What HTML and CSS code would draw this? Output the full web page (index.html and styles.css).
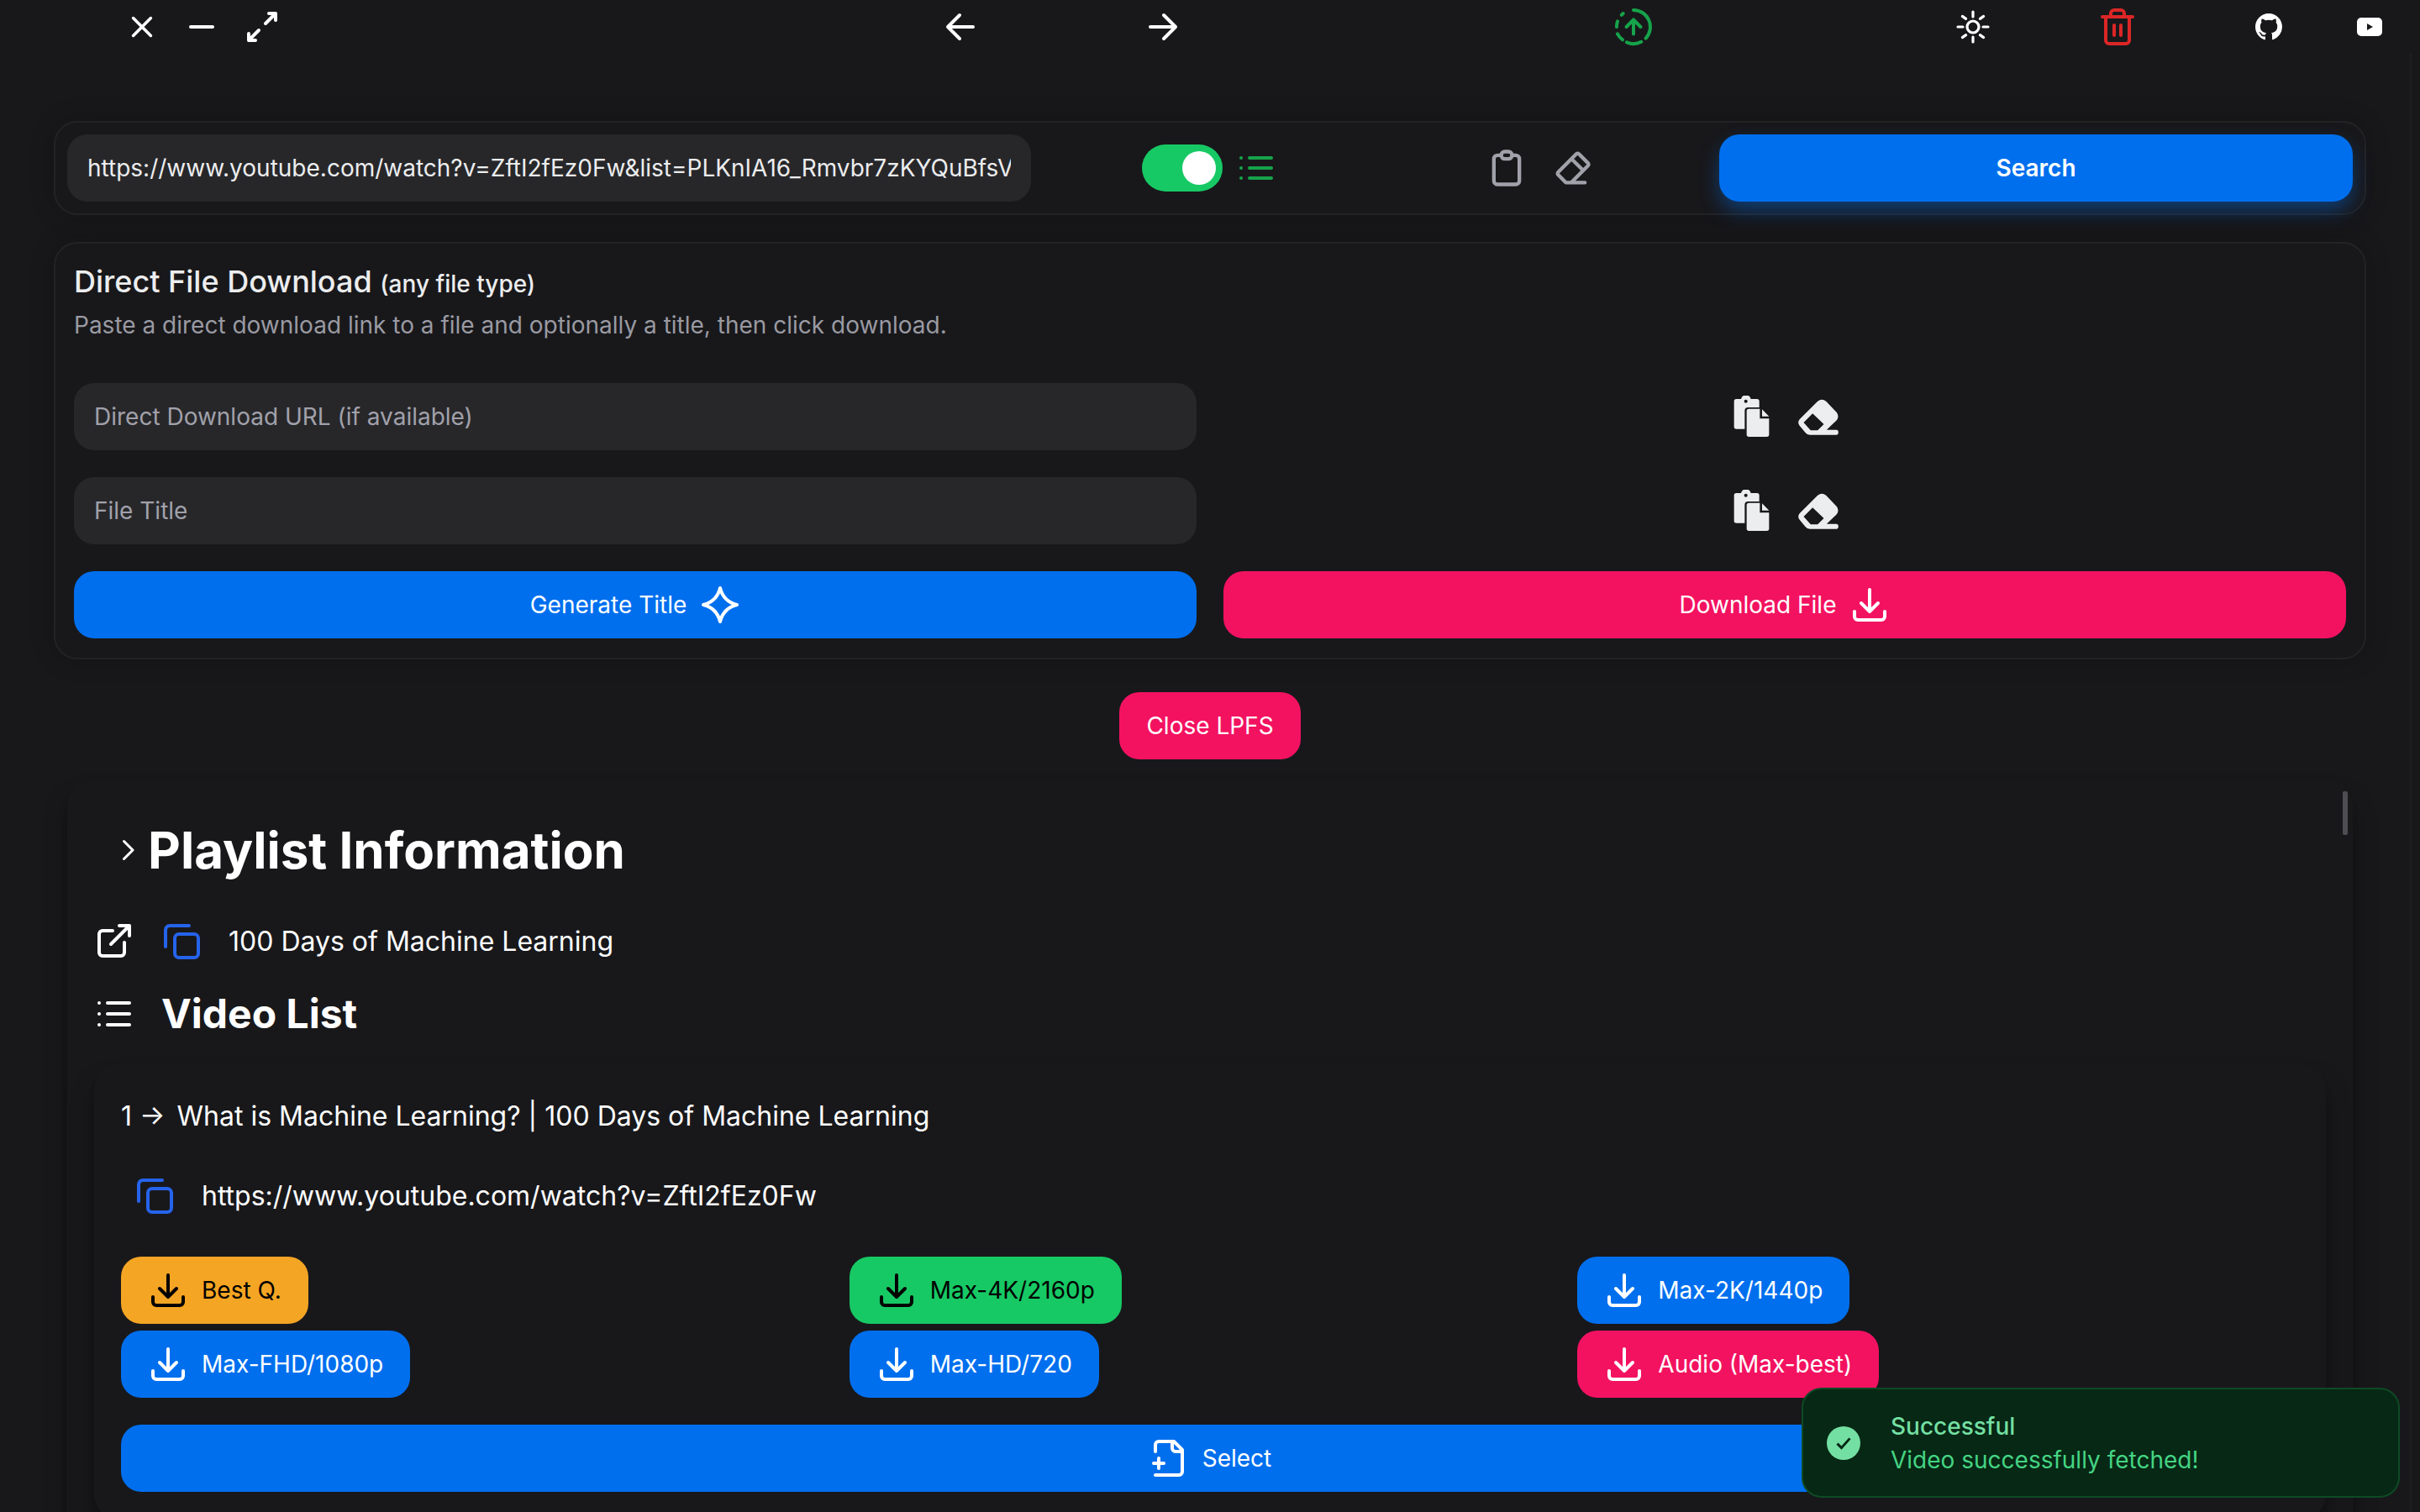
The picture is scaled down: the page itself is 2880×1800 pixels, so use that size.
FILE: index.html
```html
<!DOCTYPE html>
<html lang="en">
<head>
    <meta charset="UTF-8">
    <meta name="viewport" content="width=device-width, initial-scale=1.0">
    <title>Downloader</title>
    <link rel="stylesheet" href="styles.css">
</head>
<body>

    <header class="topbar">
        <span class="tb tb-close"><svg class="ic slim" viewBox="0 0 24 24"><path d="M17.200 6.800L6.800 17.200M6.800 6.800l10.400 10.400"/></svg></span>
        <span class="tb tb-min"><svg class="ic" viewBox="0 0 24 24"><path d="M5.500 12h13"/></svg></span>
        <span class="tb tb-max"><svg class="ic" viewBox="0 0 24 24"><path d="M16 4h4v4M14 10l6-6M8 20H4v-4M4 20l6-6"/></svg></span>
        <span class="tb tb-back"><svg class="ic" viewBox="0 0 24 24"><path d="M19.500 12h-15M11.500 5l-7 7 7 7"/></svg></span>
        <span class="tb tb-fwd"><svg class="ic" viewBox="0 0 24 24"><path d="M4.500 12h15M12.500 5l7 7-7 7"/></svg></span>
        <span class="tb tb-upload"><svg class="ic green" viewBox="0 0 24 24"><path d="M12 2a10 10 0 0 1 7.300 16.800M16.600 20.900a10 10 0 0 1-8.600.300M5.500 19.700a10 10 0 0 1-3-3.500M2 12a10 10 0 0 1 .5-3.300M4.900 4.900l.9-.9M12 16.200V7.700M7.800 12L12 7.700l4.200 4.300"/></svg></span>
        <span class="tb tb-sun"><svg class="ic thin" viewBox="0 0 24 24"><circle cx="12" cy="12" r="3.500"/><path d="M12 3v3M12 18v3M3 12h3M18 12h3M5.700 5.700l2.100 1.500M16.200 16.800l2.100 1.500M18.300 5.700l-2.100 1.500M7.800 16.800l-2.100 1.500"/></svg></span>
        <span class="tb tb-trash"><svg class="ic red" viewBox="0 0 24 24"><path d="M3 6h18M19 6v14a2 2 0 0 1-2 2H7a2 2 0 0 1-2-2V6M8 6V4a2 2 0 0 1 2-2h4a2 2 0 0 1 2 2v2M10 11v6M14 11v6"/></svg></span>
        <span class="tb tb-gh"><svg class="gh" viewBox="0 0 16 16"><path d="M8 0C3.580 0 0 3.580 0 8c0 3.540 2.290 6.530 5.470 7.590.4.070.55-.17.55-.38 0-.19-.01-.82-.01-1.490-2.010.37-2.530-.49-2.690-.94-.09-.23-.48-.94-.82-1.130-.28-.15-.68-.52-.01-.53.63-.01 1.080.58 1.230.82.72 1.210 1.870.87 2.330.66.07-.52.28-.87.51-1.070-1.780-.2-3.640-.89-3.640-3.950 0-.87.31-1.590.82-2.150-.08-.2-.36-1.020.08-2.120 0 0 .67-.21 2.200.82.64-.18 1.320-.27 2-.27.68 0 1.360.09 2 .27 1.530-1.040 2.200-.82 2.200-.82.44 1.100.16 1.920.08 2.120.51.56.82 1.270.82 2.150 0 3.070-1.870 3.750-3.650 3.950.29.25.54.73.54 1.480 0 1.070-.01 1.930-.01 2.200 0 .21.15.46.55.38A8.013 8.013 0 0016 8c0-4.420-3.580-8-8-8z"/></svg></span>
        <span class="tb tb-yt"><svg class="yt" viewBox="0 0 30 22"><path fill-rule="evenodd" d="M5 0h20a5 5 0 0 1 5 5v12a5 5 0 0 1-5 5H5a5 5 0 0 1-5-5V5a5 5 0 0 1 5-5zM12 7v8l7-4z"/></svg></span>
    </header>

    <div class="window">
        <main class="content">

            <section class="card search-card">
                <input class="field" type="text" value="https://www.youtube.com/watch?v=ZftI2fEz0Fw&amp;list=PLKnIA16_Rmvbr7zKYQuBfsVkjoLcJgxHH">
                <div class="toggle-group">
                    <span class="toggle"><span class="toggle-thumb"></span></span>
                    <svg class="ic green" viewBox="0 0 24 24"><path d="M8 6h13M8 12h13M8 18h13M3 6h.01M3 12h.01M3 18h.01"/></svg>
                </div>
                <div class="tool-group">
                    <svg class="ic gray big" viewBox="0 0 24 24"><path d="M9 5H7a2 2 0 0 0-2 2v12a2 2 0 0 0 2 2h10a2 2 0 0 0 2-2V7a2 2 0 0 0-2-2h-2"/><rect x="9" y="3" width="6" height="4" rx="2"/></svg>
                    <svg class="ic gray big" viewBox="0 0 24 24"><path d="M19 20H8.500l-4.210-4.300a1 1 0 0 1 0-1.410l10-10a1 1 0 0 1 1.410 0l5 5a1 1 0 0 1 0 1.410l-9.200 9.300M18 13.300L11.700 7"/></svg>
                </div>
                <button class="btn btn-search">Search</button>
            </section>

            <section class="card direct-card">
                <h2 class="direct-title">Direct File Download <small>(any file type)</small></h2>
                <p class="direct-desc">Paste a direct download link to a file and optionally a title, then click download.</p>
                <div class="direct-grid">
                    <input class="field" type="text" placeholder="Direct Download URL (if available)">
                    <div class="fill-tools">
                        <svg class="fill-clip" viewBox="35 18 135 150"><path fill-rule="evenodd" d="M48 30H65A18 18 0 0 1 100 30H122Q130 30 130 38V60H90Q78 60 78 72V137H48Q40 137 40 129V38Q40 30 48 30ZM82 32a6 6 0 1 0 .01 0Z"/><path d="M93 65H132V100H165V157Q165 165 157 165H93Q85 165 85 157V73Q85 65 93 65ZM140 67L165 92H140Z"/></svg>
                        <svg class="fill-eraser" viewBox="265 25 155 135"><path fill-rule="evenodd" d="M340 36Q355 24 370 36L408 76Q418 90 408 104L372 138H408Q414 138 414 146Q414 156 408 156H312Q302 156 296 148L276 124Q266 112 276 100ZM322 80L290 112L315 140H340L362 118Z"/></svg>
                    </div>
                    <input class="field" type="text" placeholder="File Title">
                    <div class="fill-tools">
                        <svg class="fill-clip" viewBox="35 18 135 150"><path fill-rule="evenodd" d="M48 30H65A18 18 0 0 1 100 30H122Q130 30 130 38V60H90Q78 60 78 72V137H48Q40 137 40 129V38Q40 30 48 30ZM82 32a6 6 0 1 0 .01 0Z"/><path d="M93 65H132V100H165V157Q165 165 157 165H93Q85 165 85 157V73Q85 65 93 65ZM140 67L165 92H140Z"/></svg>
                        <svg class="fill-eraser" viewBox="265 25 155 135"><path fill-rule="evenodd" d="M340 36Q355 24 370 36L408 76Q418 90 408 104L372 138H408Q414 138 414 146Q414 156 408 156H312Q302 156 296 148L276 124Q266 112 276 100ZM322 80L290 112L315 140H340L362 118Z"/></svg>
                    </div>
                    <button class="btn btn-blue">Generate Title
                        <svg class="ic" viewBox="0 0 24 24"><path d="M12 2Q14 10 22 12 14 14 12 22 10 14 2 12 10 10 12 2Z"/></svg>
                    </button>
                    <button class="btn btn-pink">Download File
                        <svg class="ic" viewBox="0 0 24 24"><path d="M3 16v3a2 2 0 0 0 2 2h14a2 2 0 0 0 2-2v-3M7 11l5 5 5-5M12 3v13"/></svg>
                    </button>
                </div>
            </section>

            <div class="lpfs-row"><button class="btn btn-pink btn-lpfs">Close LPFS</button></div>

            <section class="playlist">
                <span class="scroll-thumb"></span>
                <div class="pl-heading">
                    <svg class="ic chevron" viewBox="0 0 24 24"><path d="M9 5l7 7-7 7"/></svg>
                    <h1>Playlist Information</h1>
                </div>
                <div class="pl-row">
                    <svg class="ic" viewBox="0 0 24 24"><path d="M15 3h6v6M10 14L21 3M18 13v6a2 2 0 0 1-2 2H5a2 2 0 0 1-2-2V8a2 2 0 0 1 2-2h6"/></svg>
                    <svg class="ic blue" viewBox="0 0 24 24"><rect x="8" y="8" width="14" height="14" rx="2.500"/><path d="M16.500 3H5A2.500 2.500 0 0 0 2.500 5.500V15.500"/></svg>
                    <span class="pl-name">100 Days of Machine Learning</span>
                </div>
                <div class="pl-list-head">
                    <svg class="ic" viewBox="0 0 24 24"><path d="M8 6h13M8 12.500h13M8 19h13M3 6h.01M3 12.500h.01M3 19h.01"/></svg>
                    <h2>Video List</h2>
                </div>

                <article class="video-card">
                    <p class="video-title"><span class="video-no">1 →</span>What is Machine Learning? | 100 Days of Machine Learning</p>
                    <div class="video-url">
                        <svg class="ic blue" viewBox="0 0 24 24"><rect x="8" y="8" width="14" height="14" rx="2.500"/><path d="M16.500 3H5A2.500 2.500 0 0 0 2.500 5.500V15.500"/></svg>
                        <span>https://www.youtube.com/watch?v=ZftI2fEz0Fw</span>
                    </div>
                    <div class="dl-grid">
                        <div><button class="btn dl btn-amber"><svg class="ic" viewBox="0 0 24 24"><path d="M3 16v3a2 2 0 0 0 2 2h14a2 2 0 0 0 2-2v-3M7 11l5 5 5-5M12 3v13"/></svg>Best Q.</button></div>
                        <div><button class="btn dl btn-green"><svg class="ic" viewBox="0 0 24 24"><path d="M3 16v3a2 2 0 0 0 2 2h14a2 2 0 0 0 2-2v-3M7 11l5 5 5-5M12 3v13"/></svg>Max-4K/2160p</button></div>
                        <div><button class="btn dl btn-blue"><svg class="ic" viewBox="0 0 24 24"><path d="M3 16v3a2 2 0 0 0 2 2h14a2 2 0 0 0 2-2v-3M7 11l5 5 5-5M12 3v13"/></svg>Max-2K/1440p</button></div>
                        <div><button class="btn dl btn-blue"><svg class="ic" viewBox="0 0 24 24"><path d="M3 16v3a2 2 0 0 0 2 2h14a2 2 0 0 0 2-2v-3M7 11l5 5 5-5M12 3v13"/></svg>Max-FHD/1080p</button></div>
                        <div><button class="btn dl btn-blue"><svg class="ic" viewBox="0 0 24 24"><path d="M3 16v3a2 2 0 0 0 2 2h14a2 2 0 0 0 2-2v-3M7 11l5 5 5-5M12 3v13"/></svg>Max-HD/720</button></div>
                        <div><button class="btn dl btn-pink"><svg class="ic" viewBox="0 0 24 24"><path d="M3 16v3a2 2 0 0 0 2 2h14a2 2 0 0 0 2-2v-3M7 11l5 5 5-5M12 3v13"/></svg>Audio (Max-best)</button></div>
                    </div>
                    <button class="btn btn-blue btn-select">
                        <svg class="ic" viewBox="0 0 24 24"><path d="M4 22h14a2 2 0 0 0 2-2V7l-5-5H6a2 2 0 0 0-2 2v4M14 2v4a2 2 0 0 0 2 2h4M3 15h6M6 12v6"/></svg>
                        Select
                    </button>
                </article>
            </section>
        </main>
        <div class="scroll-track"></div>
    </div>

    <aside class="toast">
        <span class="toast-check"><svg viewBox="0 0 24 24"><path d="M6 12.500l4 4 8-9"/></svg></span>
        <div>
            <div class="toast-title">Successful</div>
            <div class="toast-text">Video successfully fetched!</div>
        </div>
    </aside>

</body>
</html>
```

FILE: styles.css
```css
*{
    margin: 0;
    padding: 0;
    box-sizing: border-box;
}

html,body{
    height: 100%;
    overflow: hidden;
}

body{
    background-color: #18181b;
    color: #ecedee;
    font-family: Inter, "Liberation Sans", sans-serif;
    font-size: 28px;
}

.ic{
    width: 48px;
    height: 48px;
    flex: none;
    fill: none;
    stroke: #fff;
    stroke-width: 2;
    stroke-linecap: round;
    stroke-linejoin: round;
}
.ic.green{ stroke: #16a34a; }
.ic.red{ stroke: #dc2626; }
.ic.blue{ stroke: #2563eb; }
.ic.gray{ stroke: #a1a1aa; }
.ic.thin{ stroke-width: 1.6; }
.ic.slim{ stroke-width: 1.8; }
.ic.big{ width: 52px; height: 52px; }

/* top bar */
.topbar{
    display: flex;
    align-items: center;
    height: 64px;
}
.tb{
    display: flex;
    align-items: center;
    justify-content: center;
    width: 48px;
    height: 48px;
}
.tb-close{ margin-left: 145px; }
.tb-min{ margin-left: 23px; }
.tb-max{ margin-left: 24px; }
.tb-back{ margin-left: 783px; }
.tb-fwd{ margin-left: 193px; }
.tb-upload{ margin-left: 512px; }
.tb-sun{ margin-left: 356px; }
.tb-trash{ margin-left: 124px; }
.tb-gh{ margin-left: 132px; }
.tb-yt{ margin-left: 72px; }
.gh{ width: 32px; height: 32px; fill: #fff; }
.yt{ width: 30px; height: 22px; fill: #fff; }

.window{
    display: flex;
    height: 1736px;
}
.content{
    flex: 1;
    min-width: 0;
    padding: 80px 52px 0 64px;
    overflow: hidden;
}
.scroll-track{
    width: 12px;
    border-left: 2px solid #1f1f22;
}

.card{
    border: 2px solid #232326;
    border-radius: 28px;
    background-color: #18181b;
    box-shadow: 0 0 30px rgba(0,0,0,.2);
}

.field{
    display: block;
    width: 100%;
    height: 80px;
    padding: 0 24px;
    border: 0;
    outline: none;
    border-radius: 24px;
    background-color: #27272a;
    color: #ecedee;
    font: inherit;
}
.field::placeholder{
    color: #a1a1aa;
}

.btn{
    display: inline-flex;
    align-items: center;
    justify-content: center;
    height: 80px;
    border: 0;
    border-radius: 24px;
    color: #fff;
    font: inherit;
}
.btn-blue{ background-color: #006fee; }
.btn-pink{ background-color: #f31260; }
.btn-amber{ background-color: #f5a524; color: #000; }
.btn-green{ background-color: #17c964; color: #000; }
.btn-amber .ic,.btn-green .ic{ stroke: #000; }

/* search bar */
.search-card{
    display: grid;
    grid-template-columns: 1147px 392px 379px 754px;
    column-gap: 16px;
    align-items: center;
    height: 112px;
    padding: 14px;
}
.toggle-group,.tool-group{
    display: flex;
    align-items: center;
    justify-content: center;
}
.toggle-group{ gap: 16px; }
.tool-group{
    gap: 26px;
    padding-right: 17px;
}
.toggle{
    display: flex;
    align-items: center;
    justify-content: flex-end;
    width: 96px;
    height: 56px;
    padding-right: 8px;
    border-radius: 28px;
    background-color: #17c964;
}
.toggle-thumb{
    width: 40px;
    height: 40px;
    border-radius: 50%;
    background-color: #fff;
}
.btn-search{
    background-color: #006fee;
    font-weight: 600;
    box-shadow: 0 12px 24px -2px rgba(0,111,238,.45);
}

/* direct download */
.direct-card{
    margin-top: 32px;
    padding: 21px 22px;
    height: 497px;
}
.direct-title{
    font-size: 36px;
    font-weight: 500;
    line-height: 48px;
}
.direct-title small{
    font-size: 28px;
    font-weight: 500;
}
.direct-desc{
    margin-top: 3px;
    color: #9a9aa2;
    line-height: 44px;
}
.direct-grid{
    display: grid;
    grid-template-columns: 1fr 1fr;
    gap: 32px;
    margin-top: 47px;
}
.fill-tools{
    display: flex;
    align-items: center;
    justify-content: center;
    gap: 31px;
    padding-left: 4px;
}
.fill-clip{ width: 45px; height: 50px; fill: #ecedee; }
.fill-eraser{ width: 52px; height: 45px; fill: #ecedee; }
.direct-grid .btn{ gap: 16px; }

.lpfs-row{
    display: flex;
    justify-content: center;
    margin-top: 39px;
}
.btn-lpfs{
    width: 216px;
}

/* playlist */
.playlist{
    position: relative;
    margin: 26px 16px 0;
    padding: 48px 32px 0;
    height: 1000px;
    border-radius: 28px;
    box-shadow: 0 20px 30px -6px rgba(0,0,0,.5), 0 8px 12px -8px rgba(0,0,0,.5);
}
.scroll-thumb{
    position: absolute;
    top: 12px;
    right: 6px;
    width: 6px;
    height: 52px;
    border-radius: 2px;
    background-color: #4e4e52;
}
.pl-heading{
    display: flex;
    align-items: center;
    margin-left: 22px;
    height: 68px;
}
.chevron{
    width: 36px;
    height: 48px;
    margin-right: 6px;
}
.pl-heading h1{
    font-size: 60px;
    font-weight: 700;
    color: #fff;
}
.pl-row{
    display: flex;
    align-items: center;
    gap: 32px;
    height: 48px;
    margin-top: 50px;
    color: #fff;
    font-size: 32px;
}
.pl-list-head{
    display: flex;
    align-items: center;
    gap: 32px;
    height: 60px;
    margin-top: 32px;
    color: #fff;
}
.pl-list-head h2{
    font-size: 48px;
    font-weight: 700;
}
.video-card{
    margin-top: 32px;
    width: 2656px;
    padding: 32px 24px 32px 32px;
    border-radius: 28px;
    color: #fff;
    box-shadow: 0 20px 30px -6px rgba(0,0,0,.5), 0 8px 12px -8px rgba(0,0,0,.5);
}
.video-title{
    height: 58px;
    line-height: 58px;
    font-size: 32px;
}
.video-no{
    margin-right: 14px;
}
.video-url{
    display: flex;
    align-items: center;
    gap: 32px;
    margin-top: 41px;
    padding-left: 16px;
    height: 48px;
    font-size: 32px;
}
.dl-grid{
    display: grid;
    grid-template-columns: repeat(3,1fr);
    row-gap: 8px;
    margin-top: 49px;
}
.dl{
    gap: 16px;
    padding: 0 32px;
}
.btn-select{
    display: flex;
    width: 2592px;
    gap: 16px;
    margin-top: 32px;
}

/* toast */
.toast{
    position: fixed;
    left: 2144px;
    top: 1652px;
    display: flex;
    align-items: center;
    gap: 36px;
    width: 712px;
    height: 131px;
    padding-left: 28px;
    border: 2px solid #0f4a25;
    border-radius: 24px;
    background-color: #062815;
}
.toast-check{
    display: flex;
    align-items: center;
    justify-content: center;
    width: 40px;
    height: 40px;
    border-radius: 50%;
    background-color: #74dfa2;
}
.toast-check svg{
    width: 30px;
    height: 30px;
    fill: none;
    stroke: #062815;
    stroke-width: 2.4;
}
.toast-title{
    color: #74dfa2;
    font-weight: 500;
    line-height: 40px;
}
.toast-text{
    color: #45d483;
    line-height: 40px;
}
```
